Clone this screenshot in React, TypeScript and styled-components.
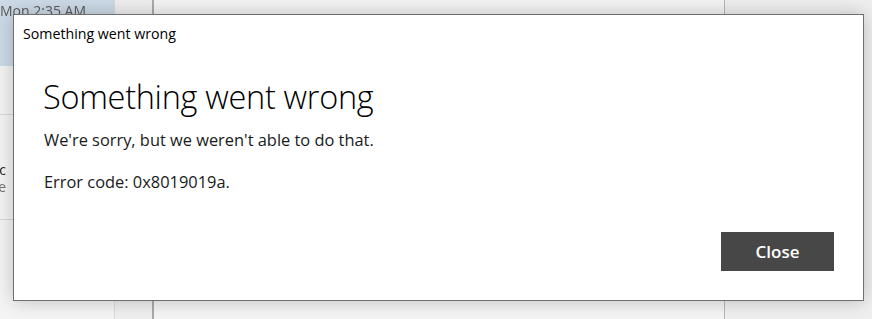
import React from "react";
import styled, { createGlobalStyle } from "styled-components";

const GlobalStyle = createGlobalStyle`
  html, body {
    margin: 0;
    padding: 0;
    background: #f2f2f2;
    overflow: hidden;
  }
  body {
    font-family: "Open Sans", "Noto Sans", "Liberation Sans", sans-serif;
  }
`;

function App(): React.ReactElement {
  return (
    <Screen>
      <GlobalStyle />
      <Backdrop>
        <MailList>
          <ListItem selected>
            <ItemTime>Mon 2:35 AM</ItemTime>
          </ListItem>
          <ListItem />
          <ListItem>
            <ItemSender>Sync</ItemSender>
            <ItemPreview>Welcome</ItemPreview>
          </ListItem>
        </MailList>
        <Gutter />
        <ReadingPane />
        <SidePane />
      </Backdrop>

      <Dialog role="dialog" aria-labelledby="dlg-title">
        <TitleBar id="dlg-title">Something went wrong</TitleBar>
        <Content>
          <Heading>Something went wrong</Heading>
          <Message>We're sorry, but we weren't able to do that.</Message>
          <Message>Error code: 0x8019019a.</Message>
        </Content>
        <Actions>
          <CloseButton>Close</CloseButton>
        </Actions>
      </Dialog>
    </Screen>
  );
}

export default App;

const Screen = styled.div`
  position: relative;
  width: 872px;
  height: 319px;
  overflow: hidden;
`;

const Backdrop = styled.div`
  display: flex;
  height: 100%;
  filter: brightness(0.955);
`;

const MailList = styled.div`
  width: 114px;
  flex: none;
  background: #fff;
  border-right: 1px solid #e3e3e3;
  display: flex;
  flex-direction: column;
`;

const ListItem = styled.div<{ selected?: boolean }>`
  height: ${(p) => (p.selected ? "66px" : "49px")};
  flex: none;
  background: ${(p) => (p.selected ? "#d6e4f2" : "#fff")};
  border-bottom: ${(p) => (p.selected ? "none" : "1px solid #e3e3e3")};
  box-sizing: border-box;
  overflow: hidden;
  &:last-child {
    height: 105px;
    padding-top: 46px;
  }
`;

const ItemTime = styled.div`
  margin-top: 1px;
  font-size: 14px;
  line-height: 19px;
  color: #5f5f5f;
  white-space: nowrap;
`;

const ItemSender = styled.div`
  width: 6px;
  overflow: hidden;
  direction: rtl;
  font-size: 14px;
  line-height: 17px;
  color: #222;
  white-space: nowrap;
`;

const ItemPreview = styled.div`
  width: 6px;
  overflow: hidden;
  direction: rtl;
  font-size: 14px;
  line-height: 17px;
  color: #777;
  white-space: nowrap;
`;

const Gutter = styled.div`
  width: 37px;
  flex: none;
  background: #fafafa;
  border-right: 2px solid #b4b4b4;
`;

const ReadingPane = styled.div`
  width: 570px;
  flex: none;
  background: #fff;
  border-right: 1px solid #c0c0c0;
  box-shadow: 3px 0 6px rgba(0, 0, 0, 0.12);
`;

const SidePane = styled.div`
  flex: 1;
  background: #fafafa;
`;

const Dialog = styled.div`
  position: absolute;
  left: 13px;
  top: 14px;
  width: 849px;
  height: 285px;
  background: #fff;
  border: 1px solid #6f6f6f;
  box-shadow: 0 0 18px rgba(0, 0, 0, 0.22);
  display: flex;
  flex-direction: column;
  font-family: "Open Sans", "Noto Sans", sans-serif;
`;

const TitleBar = styled.div`
  padding: 10px 0 0 9px;
  height: 30px;
  box-sizing: border-box;
  font-size: 14.2px;
  line-height: 17px;
  color: #000;
`;

const Content = styled.div`
  padding: 33px 0 0 29px;
  flex: 1;
`;

const Heading = styled.h1`
  margin: 0 0 13px 0;
  font-size: 32.5px;
  line-height: 38px;
  font-weight: 300;
  color: #000;
  letter-spacing: -0.3px;
`;

const Message = styled.p`
  margin: 0 0 20px 1px;
  font-size: 16.4px;
  line-height: 22px;
  color: #1a1a1a;
`;

const Actions = styled.div`
  display: flex;
  justify-content: flex-end;
  padding: 0 29px 29px 0;
`;

const CloseButton = styled.button`
  width: 113px;
  height: 39px;
  border: none;
  background: #474747;
  color: #fff;
  font-family: "Open Sans", "Noto Sans", sans-serif;
  font-size: 17px;
  font-weight: 600;
  cursor: pointer;
`;
